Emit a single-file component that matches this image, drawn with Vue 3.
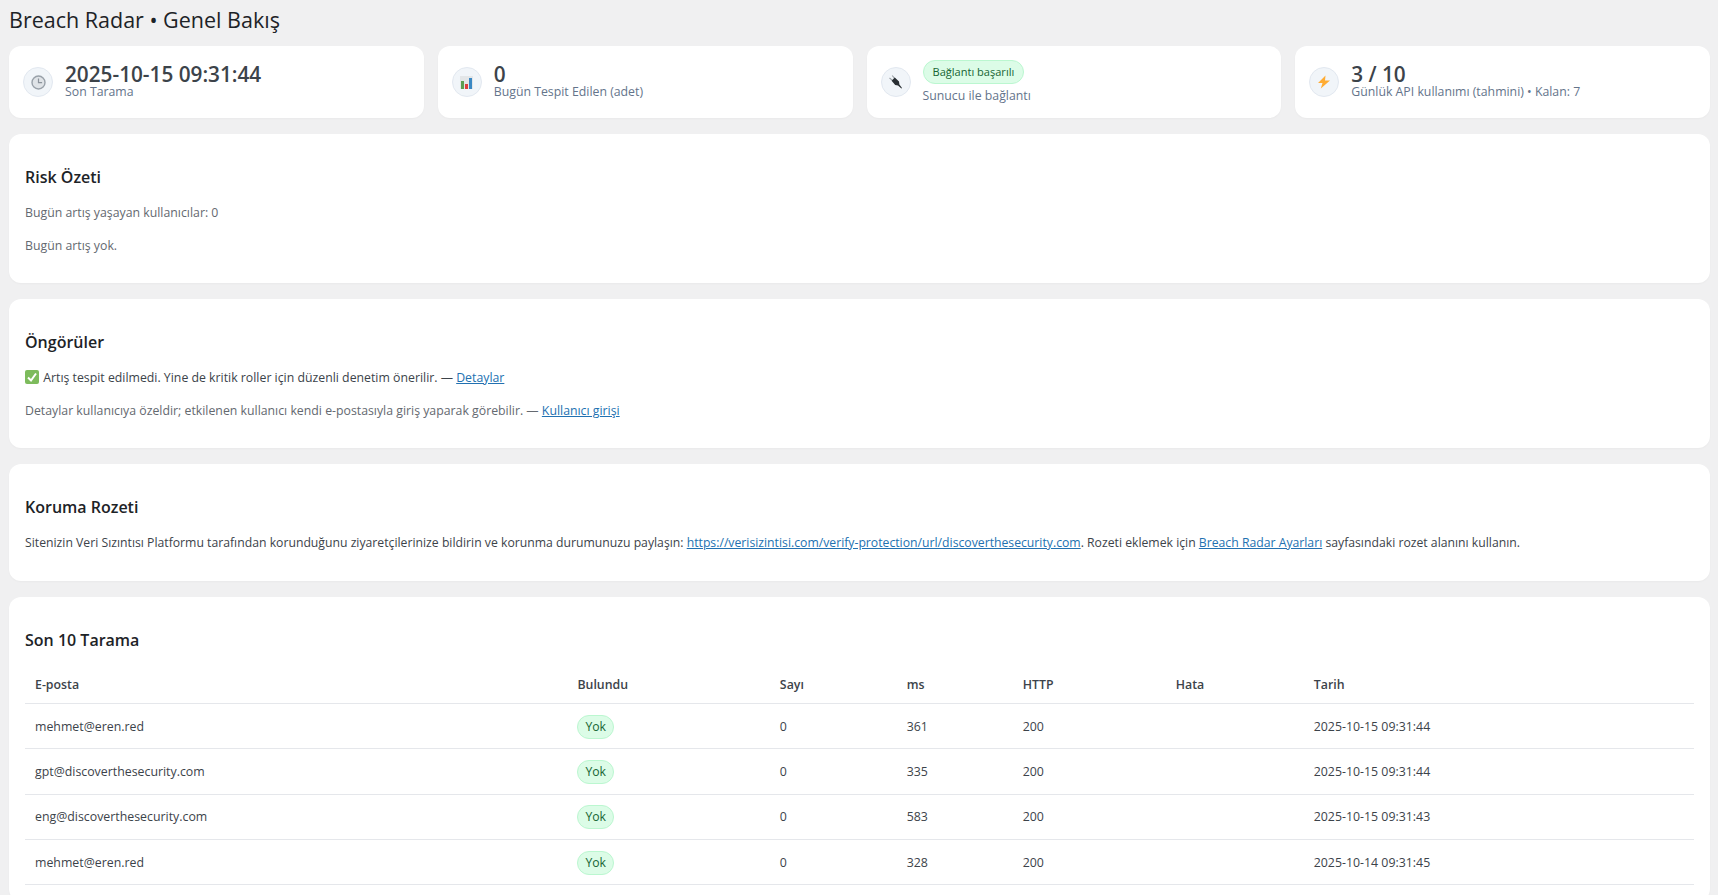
<template>
  <div class="page">
    <h1 class="page-title">Breach Radar • Genel Bakış</h1>

    <div class="stats">
      <div class="stat">
        <div class="stat-icon">
          <svg width="15" height="15" viewBox="0 0 15 15">
            <circle cx="7.5" cy="7.5" r="6.5" fill="#dfe3e7" stroke="#99a1a9" stroke-width="1.4" />
            <path d="M7.5 3.5v4.2h3.6" fill="none" stroke="#8b939b" stroke-width="1.2" />
          </svg>
        </div>
        <div class="stat-body">
          <div class="stat-value">2025-10-15 09:31:44</div>
          <div class="stat-label">Son Tarama</div>
        </div>
      </div>

      <div class="stat">
        <div class="stat-icon">
          <svg width="13" height="13" viewBox="0 0 13 13">
            <rect width="13" height="13" fill="#e3e6e8" />
            <rect x="1" y="5" width="3" height="8" fill="#5c9e52" />
            <rect x="5" y="8" width="3" height="5" fill="#dd3f3f" />
            <rect x="9" y="2" width="3" height="11" fill="#3b88c3" />
          </svg>
        </div>
        <div class="stat-body">
          <div class="stat-value">0</div>
          <div class="stat-label">Bugün Tespit Edilen (adet)</div>
        </div>
      </div>

      <div class="stat">
        <div class="stat-icon">
          <svg width="14" height="14" viewBox="0 0 14 14">
            <path d="M0.5 3l3.2 2.6M3.2 0.5l2.6 3.2" stroke="#9aa0a5" stroke-width="1.1" fill="none" />
            <path d="M2.6 5.8L5.8 2.6 10 6.4 10.4 9.4 13 13 12.4 13.6 9 10.6 6.2 10z" fill="#292f33" />
          </svg>
        </div>
        <div class="stat-body">
          <span class="badge badge-lg">Bağlantı başarılı</span>
          <div class="stat-label stat-label-gap">Sunucu ile bağlantı</div>
        </div>
      </div>

      <div class="stat">
        <div class="stat-icon">
          <svg width="14" height="14" viewBox="0 0 14 14">
            <path d="M8.5 0.5L1 8h4.5L3.8 13.5 13 5.5H8z" fill="#ffac33" />
          </svg>
        </div>
        <div class="stat-body">
          <div class="stat-value">3 / 10</div>
          <div class="stat-label">Günlük API kullanımı (tahmini) • Kalan: 7</div>
        </div>
      </div>
    </div>

    <section class="panel">
      <h2>Risk Özeti</h2>
      <p class="muted">Bugün artış yaşayan kullanıcılar: 0</p>
      <p class="muted">Bugün artış yok.</p>
    </section>

    <section class="panel">
      <h2>Öngörüler</h2>
      <p>
        <svg class="check" width="14" height="14" viewBox="0 0 14 14">
          <rect width="14" height="14" rx="2" fill="#7dbb5c" />
          <path d="M3 7.5l3 3 5-7" fill="none" stroke="#fff" stroke-width="2" />
        </svg>
        Artış tespit edilmedi. Yine de kritik roller için düzenli denetim önerilir. — <a href="#">Detaylar</a>
      </p>
      <p class="muted">Detaylar kullanıcıya özeldir; etkilenen kullanıcı kendi e-postasıyla giriş yaparak görebilir. — <a href="#">Kullanıcı girişi</a></p>
    </section>

    <section class="panel">
      <h2>Koruma Rozeti</h2>
      <p class="badge-note">Sitenizin Veri Sızıntısı Platformu tarafından korunduğunu ziyaretçilerinize bildirin ve korunma durumunuzu paylaşın: <a href="#">https://verisizintisi.com/verify-protection/url/discoverthesecurity.com</a>. Rozeti eklemek için <a href="#">Breach Radar Ayarları</a> sayfasındaki rozet alanını kullanın.</p>
    </section>

    <section class="panel">
      <h2>Son 10 Tarama</h2>
      <table class="scans">
        <thead>
          <tr>
            <th v-for="col in columns" :key="col">{{ col }}</th>
          </tr>
        </thead>
        <tbody>
          <tr v-for="(scan, i) in scans" :key="i">
            <td>{{ scan.email }}</td>
            <td><span class="badge">Yok</span></td>
            <td>0</td>
            <td>{{ scan.ms }}</td>
            <td>200</td>
            <td></td>
            <td>{{ scan.date }}</td>
          </tr>
        </tbody>
      </table>
    </section>
  </div>
</template>

<script setup>
const columns = ['E-posta', 'Bulundu', 'Sayı', 'ms', 'HTTP', 'Hata', 'Tarih']

const scans = [
  { email: 'mehmet@eren.red', ms: 361, date: '2025-10-15 09:31:44' },
  { email: 'gpt@discoverthesecurity.com', ms: 335, date: '2025-10-15 09:31:44' },
  { email: 'eng@discoverthesecurity.com', ms: 583, date: '2025-10-15 09:31:43' },
  { email: 'mehmet@eren.red', ms: 328, date: '2025-10-14 09:31:45' }
]
</script>

<style>
html, body {
  margin: 0;
  background: #f0f0f1;
  overflow: hidden;
}
</style>

<style scoped>
.page {
  padding: 0 8px 0 9px;
  font-family: "Open Sans", "Noto Sans", sans-serif;
  font-size: 12.3px;
  line-height: 19.5px;
  color: #3c434a;
}

.page-title {
  margin: 0;
  padding: 5px 0 12px;
  font-size: 21.5px;
  font-weight: 400;
  line-height: 29px;
  color: #1d2327;
}

.stats {
  display: grid;
  grid-template-columns: repeat(4, 1fr);
  gap: 14px;
}

.stat {
  display: flex;
  align-items: center;
  gap: 12px;
  height: 72px;
  box-sizing: border-box;
  padding: 0 14px;
  background: #fff;
  border-radius: 12px;
  box-shadow: 0 1px 2px rgba(0, 0, 0, 0.03);
}

.stat-icon {
  flex: none;
  display: flex;
  align-items: center;
  justify-content: center;
  width: 30px;
  height: 30px;
  box-sizing: border-box;
  border: 1px solid #e2e8f0;
  border-radius: 50%;
  background: #f1f5f9;
}

.stat-body {
  margin-bottom: 2px;
}

.stat-value {
  font-size: 20.75px;
  font-weight: 600;
  line-height: 22px;
  color: #3c434a;
}

.stat-label {
  font-size: 12.3px;
  line-height: 14px;
  color: #64748b;
}

.stat-label-gap {
  margin-top: 5px;
}

.badge {
  display: inline-block;
  box-sizing: border-box;
  height: 24px;
  padding: 0 7px;
  border: 1px solid #bbf7d0;
  border-radius: 999px;
  background: #dcfce7;
  font-size: 12.2px;
  line-height: 22px;
  color: #166534;
  vertical-align: middle;
}

.badge-lg {
  display: block;
  width: fit-content;
  padding: 0 9px;
  font-size: 11.05px;
}

.panel {
  margin-top: 16px;
  padding: 16px;
  background: #fff;
  border-radius: 12px;
  box-shadow: 0 1px 2px rgba(0, 0, 0, 0.03);
}

.panel h2 {
  margin: 16px 0 15px;
  font-size: 16px;
  font-weight: 600;
  line-height: 22px;
  color: #1d2327;
}

.panel p {
  margin: 0 0 13px;
}

.panel p:last-child {
  margin-bottom: 12px;
}

.panel .badge-note {
  font-size: 12.23px;
}

.muted {
  color: #646970;
}

a {
  color: #2271b1;
}

.check {
  margin-right: 1px;
  vertical-align: -2px;
}

.scans {
  width: 100%;
  margin-top: -1px;
  border-collapse: collapse;
  table-layout: fixed;
  font-size: 12.35px;
}

.scans th {
  box-sizing: border-box;
  height: 39px;
  padding: 1px 10px 0;
  border-bottom: 1px solid #e5e7eb;
  text-align: left;
  font-weight: 600;
}

.scans td {
  height: 45.3px;
  padding: 1px 10px 0;
  box-sizing: border-box;
  border-bottom: 1px solid #e5e7eb;
}

.scans th:nth-child(1) { width: 32.5%; }
.scans th:nth-child(2) { width: 12.13%; }
.scans th:nth-child(3) { width: 7.6%; }
.scans th:nth-child(4) { width: 6.95%; }
.scans th:nth-child(5) { width: 9.17%; }
.scans th:nth-child(6) { width: 8.27%; }
</style>
